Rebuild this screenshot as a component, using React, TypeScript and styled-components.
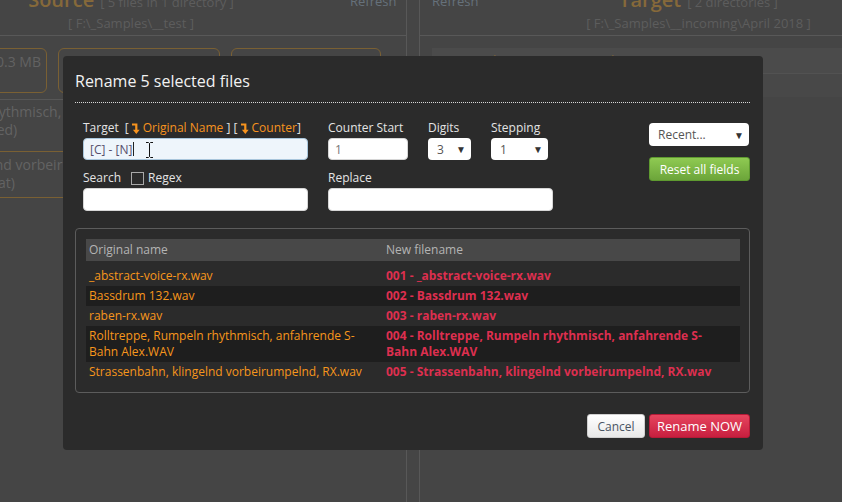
import styled, { createGlobalStyle } from "styled-components";

const GlobalStyle = createGlobalStyle`
  html, body {
    margin: 0;
    padding: 0;
    background: #454545;
  }
  body {
    font-family: "Open Sans", "Liberation Sans", sans-serif;
    overflow: hidden;
  }
  * {
    box-sizing: border-box;
  }
`;

/* ---------- dimmed app behind the dialog ---------- */

const Page = styled.div`
  position: relative;
  width: 842px;
  height: 502px;
  overflow: hidden;
  display: flex;
  background: #454545;
`;

const Panel = styled.div<{ $side: "left" | "right" }>`
  width: ${(p) => (p.$side === "left" ? "407px" : "auto")};
  flex: ${(p) => (p.$side === "left" ? "none" : "1")};
  border-right: ${(p) => (p.$side === "left" ? "1px solid #585858" : "none")};
  border-left: ${(p) => (p.$side === "right" ? "1px solid #585858" : "none")};
  overflow: hidden;
`;

const Gutter = styled.div`
  width: 12px;
  flex: none;
`;

const PanelHeader = styled.div`
  height: 36px;
  border-bottom: 1px solid #585858;
  display: flex;
  align-items: flex-start;
`;

const HeaderTitle = styled.div<{ $width: number; $offset?: number }>`
  width: ${(p) => p.$width}px;
  margin-left: ${(p) => p.$offset ?? 0}px;
  flex: none;
  text-align: center;
  margin-top: -13px;
`;

const PanelName = styled.span`
  font-size: 20px;
  font-weight: 600;
  color: #86693a;
  line-height: 26px;
`;

const PanelCount = styled.span`
  font-size: 13px;
  color: #5d5d5d;
  margin-left: 6px;
`;

const PanelPath = styled.div`
  font-size: 13px;
  color: #5d5d5d;
  line-height: 16px;
  margin-top: 2px;
`;

const Refresh = styled.span<{ $gap: number }>`
  font-size: 13px;
  color: #66717b;
  margin-top: -8px;
  margin-left: ${(p) => p.$gap}px;
`;

const Cards = styled.div`
  display: flex;
  gap: 11px;
  padding-top: 12px;
  margin-left: -53px;
`;

const Card = styled.div<{ $width: number }>`
  width: ${(p) => p.$width}px;
  height: 45px;
  flex: none;
  border: 1px solid #7a6033;
  border-radius: 6px;
  padding: 4px 5px 0;
  font-size: 14px;
  line-height: 18px;
  color: #626262;
`;

const CardLine = styled.div<{ $align: "left" | "right"; $indent?: number }>`
  text-align: ${(p) => p.$align};
  margin-left: ${(p) => p.$indent ?? 0}px;
  white-space: nowrap;
`;

const FileList = styled.div`
  margin-top: 6px;
  border-top: 1px solid #575757;
`;

const FileItem = styled.div<{ $tall?: boolean }>`
  padding: ${(p) => (p.$tall ? "3px 0 12px" : "4px 0 5px")};
  border-bottom: 1px solid #7a6033;
  font-size: 14px;
  line-height: 18px;
  color: #636363;
  white-space: nowrap;
`;

const Scrolled = styled.div<{ $shift: number }>`
  margin-left: -${(p) => p.$shift}px;
`;

const TargetRows = styled.div`
  padding: 12px 0 0 12px;
`;

const TargetRow = styled.div<{ $tone: "light" | "dark" }>`
  height: ${(p) => (p.$tone === "light" ? "25px" : "24px")};
  background: ${(p) => (p.$tone === "light" ? "#4b4b4b" : "#484848")};
  border-top: ${(p) => (p.$tone === "dark" ? "1px solid #525252" : "none")};
  padding: 3px 6px;
  font-size: 13px;
  color: #7e6437;
`;

/* ---------- dialog ---------- */

const Dialog = styled.div`
  position: absolute;
  left: 63px;
  top: 56px;
  width: 700px;
  height: 394px;
  background: #2b2b2b;
  border-radius: 4px;
  padding: 0 13px 12px 12px;
  display: flex;
  flex-direction: column;
  color: #e4e4e4;
  font-size: 12px;
`;

const Title = styled.h2`
  margin: 0;
  padding: 13px 0 8px;
  font-size: 16px;
  font-weight: 400;
  line-height: 25px;
  color: #f2f2f2;
  border-bottom: 1px dotted #d8d8d8;
`;

const Form = styled.div`
  display: flex;
  padding: 17px 0 0 8px;
`;

const Fields = styled.div`
  display: grid;
  grid-template-columns: 225px 80px 43px 57px;
  column-gap: 20px;
  row-gap: 10px;
`;

const Field = styled.div<{ $span?: string }>`
  display: flex;
  flex-direction: column;
  gap: 2px;
  grid-column: ${(p) => p.$span ?? "auto"};
`;

const Label = styled.div`
  display: flex;
  align-items: center;
  height: 16px;
  line-height: 16px;
  white-space: pre;
  color: #e4e4e4;
`;

const Brackets = styled.span`
  display: inline-flex;
  align-items: center;
  margin-left: 6px;
  color: #e0e0e0;
`;

const Tag = styled.span`
  display: inline-flex;
  align-items: center;
  gap: 3px;
  color: #f7931e;
`;

const TextBox = styled.div<{ $focused?: boolean; $width?: number; $height?: number }>`
  position: relative;
  width: ${(p) => (p.$width ? `${p.$width}px` : "100%")};
  height: ${(p) => p.$height ?? 22}px;
  background: ${(p) => (p.$focused ? "#eef5fb" : "#ffffff")};
  border: 1px solid ${(p) => (p.$focused ? "#a9c6dc" : "#d6d6d6")};
  border-radius: 4px;
  padding: 0 6px;
  display: flex;
  align-items: center;
  color: ${(p) => (p.$focused ? "#574f6c" : "#777")};
  font-size: 12px;
`;

const Caret = styled.span`
  display: inline-block;
  width: 1px;
  height: 14px;
  background: #222;
  margin-left: 1px;
`;

const Pointer = styled.svg`
  position: absolute;
  left: 61px;
  top: 3px;
`;

const Select = styled.div<{ $width: number; $height?: number }>`
  width: ${(p) => p.$width}px;
  height: ${(p) => p.$height ?? 22}px;
  background: #ffffff;
  border-radius: 4px;
  padding: 0 5px 0 9px;
  display: flex;
  align-items: center;
  justify-content: space-between;
  color: #555;
  font-size: 12px;
`;

const Arrow = styled.span`
  font-size: 10px;
  color: #333;
`;

const CheckBox = styled.span`
  width: 13px;
  height: 13px;
  border: 1px solid #a8a8a8;
  margin: 0 4px 0 10px;
`;

const Side = styled.div`
  margin-left: auto;
  width: 101px;
  padding-top: 3px;
  display: flex;
  flex-direction: column;
  gap: 11px;
`;

const Button = styled.button<{ $variant: "green" | "white" | "red"; $width: number }>`
  width: ${(p) => p.$width}px;
  height: 24px;
  border-radius: 3px;
  font-family: inherit;
  font-size: ${(p) => (p.$variant === "red" ? "13px" : "12px")};
  padding: 0;
  cursor: pointer;
  border: 1px solid
    ${(p) =>
      p.$variant === "green" ? "#5f9a30" : p.$variant === "red" ? "#b51a37" : "#cfcfcf"};
  color: ${(p) => (p.$variant === "white" ? "#4a5563" : "#ffffff")};
  background: ${(p) =>
    p.$variant === "green"
      ? "linear-gradient(#8fca52, #6ca53a)"
      : p.$variant === "red"
      ? "linear-gradient(#e6455e, #c71f3f)"
      : "linear-gradient(#ffffff, #e8e8e8)"};
`;

const TableBox = styled.div`
  margin-top: 17px;
  border: 1px solid #5c5c5c;
  border-radius: 4px;
  padding: 10px 9px 10px 10px;
`;

const Row = styled.div<{ $kind?: "head" | "dark" }>`
  display: grid;
  grid-template-columns: 297px 1fr;
  background: ${(p) =>
    p.$kind === "head" ? "#484848" : p.$kind === "dark" ? "#1e1e1e" : "transparent"};
  margin-bottom: ${(p) => (p.$kind === "head" ? "5px" : "0")};
  line-height: 16px;
  font-size: 12px;
`;

const Cell = styled.div<{ $kind: "head" | "old" | "new" }>`
  padding: ${(p) => (p.$kind === "head" ? "3px 3px" : "2px 3px")};
  color: ${(p) =>
    p.$kind === "head" ? "#b4b4b4" : p.$kind === "old" ? "#f7961c" : "#dd2f4f"};
  font-weight: ${(p) => (p.$kind === "new" ? 700 : 400)};
`;

const Footer = styled.div`
  margin-top: auto;
  display: flex;
  justify-content: flex-end;
  gap: 4px;
`;

const LevelDown = () => (
  <svg width="8" height="11" viewBox="0 0 8 11">
    <path d="M0 0.5h5.4v6.3h2.3L4.3 11 0.9 6.8h2.3V2.6H0z" fill="currentColor" />
  </svg>
);

const files = [
  ["_abstract-voice-rx.wav"],
  ["Bassdrum 132.wav"],
  ["raben-rx.wav"],
  ["Rolltreppe, Rumpeln rhythmisch, anfahrende S-", "Bahn Alex.WAV"],
  ["Strassenbahn, klingelnd vorbeirumpelnd, RX.wav"],
];

const App = () => {
  return (
    <Page>
      <GlobalStyle />
      <Panel $side="left">
        <PanelHeader>
          <HeaderTitle $width={262}>
            <PanelName>Source</PanelName>
            <PanelCount>[ 5 files in 1 directory ]</PanelCount>
            <PanelPath>[ F:\_Samples\__test ]</PanelPath>
          </HeaderTitle>
          <Refresh $gap={88}>Refresh</Refresh>
        </PanelHeader>
        <Cards>
          <Card $width={100}>
            <CardLine $align="right">Total: 0.3 MB</CardLine>
            <CardLine $align="left" $indent={-22}>(menu)</CardLine>
          </Card>
          <Card $width={162} />
          <Card $width={150} />
        </Cards>
        <FileList>
          <FileItem $tall>
            <Scrolled $shift={153}>
              Rolltreppe, Rumpeln rhythmisch, anfahrende S-Bahn Alex.WAV
            </Scrolled>
            <Scrolled $shift={76}>(not renamed)</Scrolled>
          </FileItem>
          <FileItem>
            <Scrolled $shift={144}>Strassenbahn, klingelnd vorbeirumpelnd, RX.wav</Scrolled>
            <Scrolled $shift={38}>(format)</Scrolled>
          </FileItem>
        </FileList>
      </Panel>
      <Gutter />
      <Panel $side="right">
        <PanelHeader>
          <Refresh $gap={12}>Refresh</Refresh>
          <HeaderTitle $width={300} $offset={70}>
            <PanelName>Target</PanelName>
            <PanelCount>[ 2 directories ]</PanelCount>
            <PanelPath>[ F:\_Samples\__incoming\April 2018 ]</PanelPath>
          </HeaderTitle>
        </PanelHeader>
        <TargetRows>
          <TargetRow $tone="light">F:\_Samples\__incoming\April 2018</TargetRow>
          <TargetRow $tone="dark" />
        </TargetRows>
      </Panel>

      <Dialog>
        <Title>Rename 5 selected files</Title>
        <Form>
          <Fields>
            <Field>
              <Label>
                Target
                <Brackets>
                  {"[ "}
                  <Tag>
                    <LevelDown />
                    Original Name
                  </Tag>
                  {" ] [ "}
                  <Tag>
                    <LevelDown />
                    Counter
                  </Tag>
                  {"]"}
                </Brackets>
              </Label>
              <TextBox $focused>
                [C] - [N]
                <Caret />
                <Pointer width="9" height="16" viewBox="0 0 9 16">
                  <path
                    d="M1 0.5h2.5l1 1 1-1H8M4.5 1.5v13M1 15.5h2.5l1-1 1 1H8"
                    stroke="#111"
                    strokeWidth="1"
                    fill="none"
                  />
                </Pointer>
              </TextBox>
            </Field>
            <Field>
              <Label>Counter Start</Label>
              <TextBox>1</TextBox>
            </Field>
            <Field>
              <Label>Digits</Label>
              <Select $width={43}>
                3<Arrow>▼</Arrow>
              </Select>
            </Field>
            <Field>
              <Label>Stepping</Label>
              <Select $width={57}>
                1<Arrow>▼</Arrow>
              </Select>
            </Field>
            <Field>
              <Label>
                Search
                <CheckBox />
                Regex
              </Label>
              <TextBox $height={23} />
            </Field>
            <Field $span="2 / 5">
              <Label>Replace</Label>
              <TextBox $height={23} $width={225} />
            </Field>
          </Fields>
          <Side>
            <Select $width={100} $height={23}>
              Recent...<Arrow>▼</Arrow>
            </Select>
            <Button $variant="green" $width={101}>
              Reset all fields
            </Button>
          </Side>
        </Form>

        <TableBox>
          <Row $kind="head">
            <Cell $kind="head">Original name</Cell>
            <Cell $kind="head">New filename</Cell>
          </Row>
          {files.map((lines, i) => (
            <Row key={i} $kind={i % 2 === 1 ? "dark" : undefined}>
              <Cell $kind="old">
                {lines.map((l, j) => (
                  <div key={j}>{l}</div>
                ))}
              </Cell>
              <Cell $kind="new">
                {lines.map((l, j) => (
                  <div key={j}>{j === 0 ? `00${i + 1} - ${l}` : l}</div>
                ))}
              </Cell>
            </Row>
          ))}
        </TableBox>

        <Footer>
          <Button $variant="white" $width={58}>
            Cancel
          </Button>
          <Button $variant="red" $width={101}>
            Rename NOW
          </Button>
        </Footer>
      </Dialog>
    </Page>
  );
};

export default App;
